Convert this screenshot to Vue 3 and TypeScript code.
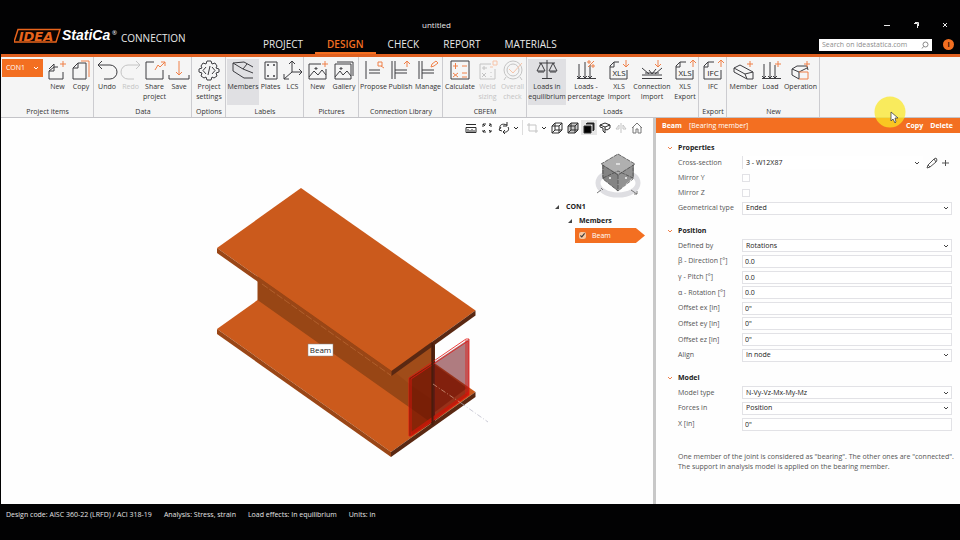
<script setup lang="ts">
import { ref } from 'vue'

interface Tool {
  label: string[]
  width: number
  ink: string
  accent?: string
  text?: string
  active?: boolean
  disabled?: boolean
}
interface Group {
  name: string
  tools: Tool[]
}
interface Field {
  id: string
  label: string
  kind: 'section' | 'check' | 'select' | 'text'
  value: string
}

const tabs = ['PROJECT', 'DESIGN', 'CHECK', 'REPORT', 'MATERIALS']
const activeTab = ref('DESIGN')

const loads = 'M3 19.5H22M5 5V19M11 3V19M16 6V19M3 17L5 19L7 17M9 17L11 19L13 17M14 17L16 19L18 17'

const groups: Group[] = [
  {
    name: 'Project items',
    tools: [
      { label: ['New'], width: 23, ink: 'M12 8H8L3 12V20H17V13M8 5V12H3M8 5L3 10', accent: 'M17 2V8M14 5H20' },
      { label: ['Copy'], width: 24, ink: 'M9 4H17V20H4V9L9 4V9H4', accent: 'M12 2H20V18' },
    ],
  },
  {
    name: 'Data',
    tools: [
      { label: ['Undo'], width: 24, ink: 'M7 2L3 6L7 10M3 6H15A7 7 0 0 1 15 20H9' },
      { label: ['Redo'], width: 23, ink: 'M17 2L21 6L17 10M21 6H9A7 7 0 0 0 9 20H15', disabled: true },
      { label: ['Share', 'project'], width: 25, ink: 'M11 3H3V20H20V11', accent: 'M12 11L15 6L17 8L22 3M18 3H22V7' },
      { label: ['Save'], width: 24, ink: 'M2 16V20H22V16', accent: 'M12 2V16M9 13L12 16L15 13' },
    ],
  },
  {
    name: 'Options',
    tools: [
      {
        label: ['Project', 'settings'],
        width: 32,
        ink: 'M10 2H14L15 5L18 4L20 7L19 9L22 10V13L19 14L20 17L17 19L15 18L14 21H10L9 18L7 19L4 17L5 14L2 13V10L5 9L4 7L6 4L9 5ZM9 8L6 11.500L9 15M15 8L18 11.500L15 15M13 7L11 16',
      },
    ],
  },
  {
    name: 'Labels',
    tools: [
      { label: ['Members'], width: 32, active: true, ink: 'M2 4L13 3L22 8M2 4V12L13 19H22M2 4L12 10M12 10L22 14M12 10L16 5' },
      { label: ['Plates'], width: 23, ink: 'M6 3H18V20H6ZM9 5V7M15 5V7M9 16V18M15 16V18M8 6H10M14 6H16M8 17H10M14 17H16' },
      { label: ['LCS'], width: 21, ink: 'M11 2V13L3 20M11 13H21M8 5L11 2L14 5M18 10L21 13L18 16M3 15V20H8' },
    ],
  },
  {
    name: 'Pictures',
    tools: [
      { label: ['New'], width: 25, ink: 'M15 5H3V20H20V10M3 18L8 12L12 16L16 11L20 16M9 9H11V10H9Z', accent: 'M19 2V8M16 5H22' },
      { label: ['Gallery'], width: 28, ink: 'M3 5H19V20H3ZM3 18L8 12L11 16L15 12L19 17M8 9H10V10H8ZM5 3H21V17' },
    ],
  },
  {
    name: 'Connection Library',
    tools: [
      { label: ['Propose'], width: 27, ink: 'M4 2V20M7 11H18M7 14H18', accent: 'M16 3H20V7H16ZM19 7L22 9' },
      { label: ['Publish'], width: 27, ink: 'M3 2V20M6 2V20M6 11H18M6 14H18', accent: 'M18 8V2M15 5L18 2L21 5' },
      { label: ['Manage'], width: 28, ink: 'M3 2V20M6 2V20M6 11H18M6 14H18', accent: 'M15 8L16 5L20 2L22 4L18 7Z' },
    ],
  },
  {
    name: 'CBFEM',
    tools: [
      { label: ['Calculate'], width: 32, ink: 'M3 2H21V20H3Z', accent: 'M5 7H10M7.500 4V10M14 7H19M5 14L10 18M10 14L5 18M14 14H19M14 18H19' },
      { label: ['Weld', 'sizing'], width: 23, disabled: true, ink: 'M15 5H4V20H19V10M6 9H11M8 7V11M6 14L10 18M10 14L6 18M15 13V14M15 17V18', accent: 'M17 2H21V6H17ZM14 8H17' },
      {
        label: ['Overall', 'check'],
        width: 27,
        disabled: true,
        ink: 'M12 2A9 9 0 1 0 12 20A9 9 0 1 0 12 2M12 5A6 6 0 1 0 12 17A6 6 0 1 0 12 5M5 18L3 21M19 18L21 21',
        accent: 'M8 10L12 14L21 4',
      },
    ],
  },
  {
    name: 'Loads',
    tools: [
      { label: ['Loads in', 'equilibrium'], width: 38, active: true, ink: 'M12 1V19M7 19.500H17M4 4H20M6 4L2 12H10L6 4M18 4L14 12H22L18 4M3 13H9M15 13H21' },
      { label: ['Loads -', 'percentage'], width: 40, ink: loads, accent: 'M14 8L20 2M14 2H16V4H14ZM18 6H20V8H18Z' },
      { label: ['XLS', 'Import'], width: 26, ink: 'M12 3H7L3 7V20H20V11M3 8H7V3', accent: 'M19 1V7M16 5L19 8L22 5', text: 'XLS' },
      { label: ['Connection', 'Import'], width: 40, ink: 'M2 16H22M2 19.500H22M2 9L9 15M22 9L15 15M9 11L12 15L16 10M5 14H19', accent: 'M18 1V7M15 5L18 8L21 5' },
      { label: ['XLS', 'Export'], width: 26, ink: 'M13 3H7L3 7V20H20V11M3 8H7V3', accent: 'M20 8V1M17 4L20 1L23 4', text: 'XLS' },
    ],
  },
  {
    name: 'Export',
    tools: [{ label: ['IFC'], width: 26, ink: 'M13 3H7L3 7V20H20V11M3 8H7V3', accent: 'M20 8V1M17 4L20 1L23 4', text: 'IFC' }],
  },
  {
    name: 'New',
    tools: [
      { label: ['Member'], width: 31, ink: 'M2 9L8 6L21 13V20H15L2 13ZM2 9L13 15L21 13M13 15L15 20', accent: 'M18 2V8M15 5H21' },
      { label: ['Load'], width: 23, ink: loads, accent: 'M19 2V8M16 5H22' },
      { label: ['Operation'], width: 37, ink: 'M3 10L8 7H18L19 11M3 10L10 13V20L3 16ZM10 13L18 9', accent: 'M10 13H19V20H10M18 2V8M15 5H21' },
    ],
  },
]

const sections = ref<{ title: string; size: string; fields: Field[] }[]>([
  {
    title: 'Properties',
    size: 'tight',
    fields: [
      { id: 'cross', label: 'Cross-section', kind: 'section', value: '3 - W12X87' },
      { id: 'mirror-y', label: 'Mirror Y', kind: 'check', value: '' },
      { id: 'mirror-z', label: 'Mirror Z', kind: 'check', value: '' },
      { id: 'geom', label: 'Geometrical type', kind: 'select', value: 'Ended' },
    ],
  },
  {
    title: 'Position',
    size: 'long',
    fields: [
      { id: 'defined', label: 'Defined by', kind: 'select', value: 'Rotations' },
      { id: 'beta', label: 'β - Direction [°]', kind: 'text', value: '0.0' },
      { id: 'gamma', label: 'γ - Pitch [°]', kind: 'text', value: '0.0' },
      { id: 'alpha', label: 'α - Rotation [°]', kind: 'text', value: '0.0' },
      { id: 'ex', label: 'Offset ex [in]', kind: 'text', value: '0"' },
      { id: 'ey', label: 'Offset ey [in]', kind: 'text', value: '0"' },
      { id: 'ez', label: 'Offset ez [in]', kind: 'text', value: '0"' },
      { id: 'align', label: 'Align', kind: 'select', value: 'In node' },
    ],
  },
  {
    title: 'Model',
    size: 'short',
    fields: [
      { id: 'model', label: 'Model type', kind: 'select', value: 'N-Vy-Vz-Mx-My-Mz' },
      { id: 'forces', label: 'Forces in', kind: 'select', value: 'Position' },
      { id: 'x', label: 'X [in]', kind: 'text', value: '0"' },
    ],
  },
])
const beamVisible = ref(true)
const search = ref('')
</script>

<template>
  <div class="app">
    <header class="top">
      <div class="brand">
        <svg class="logo" width="104" height="18" viewBox="0 0 104 18" role="img" aria-label="IDEA StatiCa">
          <path d="M4 2.500H46L42 15H0Z" fill="#0a0402" stroke="#e8641c" stroke-width="1.500" />
          <text x="22" y="13.500" text-anchor="middle" class="idea">IDEA</text>
          <text x="48" y="13" class="statica">StatiCa</text>
          <text x="98" y="8" class="reg">®</text>
        </svg>
        <span>CONNECTION</span>
      </div>
      <div class="doc">untitled</div>
      <div class="window">
        <button aria-label="Minimize"><svg width="8" height="8"><path d="M1 4.500H7" /></svg></button>
        <button aria-label="Restore"><svg width="8" height="8"><path d="M2 2.500H5.500V7M3 1.500H6.500V5" /></svg></button>
        <button aria-label="Close"><svg width="8" height="8"><path d="M2 2L6 6M6 2L2 6" /></svg></button>
      </div>
      <nav class="tabs">
        <button v-for="t in tabs" :key="t" :class="{ on: t === activeTab }" @click="activeTab = t">{{ t }}</button>
      </nav>
      <div class="help">
        <label class="search">
          <input v-model="search" type="text" placeholder="Search on ideastatica.com" aria-label="Search on ideastatica.com" />
          <svg width="8" height="8"><circle cx="4.500" cy="3.500" r="2.500" /><path d="M2.500 5.500L1 7.500" /></svg>
        </label>
        <button class="info" aria-label="Information">i</button>
      </div>
    </header>

    <div class="ribbon">
      <section v-for="(g, gi) in groups" :key="gi" class="group">
        <div class="tools">
          <button v-if="gi === 0" class="item">
            CON1
            <svg width="6" height="4"><path d="M1 1L3 3L5 1" /></svg>
          </button>
          <button
            v-for="(t, ti) in g.tools"
            :key="ti"
            class="tool"
            :class="{ active: t.active }"
            :disabled="t.disabled"
            :style="{ width: t.width + 'px' }"
          >
            <svg width="24" height="22" viewBox="0 0 24 22">
              <path class="ink" :d="t.ink" />
              <path v-if="t.accent" class="accent" :d="t.accent" />
              <text v-if="t.text" x="12" y="17" text-anchor="middle">{{ t.text }}</text>
            </svg>
            <span v-for="l in t.label" :key="l">{{ l }}</span>
          </button>
        </div>
        <h2>{{ g.name }}</h2>
      </section>
    </div>

    <main class="work">
      <div class="view">
        <svg class="scene" viewBox="1 118 652 386" preserveAspectRatio="xMinYMin meet">
          <path d="M217 329L301 269L475.500 392L391 452Z" fill="#cb5a1c" />
          <path d="M217 329L391 452V457L217 334Z" fill="#9a4616" />
          <path d="M391 452L475.500 392V397L391 457Z" fill="#5a2812" />
          <path d="M257.500 275V300L433 424V343L391 330Z" fill="#984615" />
          <path d="M392 370L431 343V399L412 386Z" fill="#a04c19" />
          <path d="M431.500 342H435V423L431.500 425Z" fill="#542610" />
          <path d="M301 188L475.500 310.500L391.500 371L217 248Z" fill="#cb5a1c" />
          <path d="M217 248L391.500 371V376L217 253Z" fill="#9a4616" />
          <path d="M391.500 371L475.500 310.500V315.500L391.500 376Z" fill="#5a2812" />
          <path d="M262 284L391 375.500" stroke="#c0713a" stroke-width=".6" stroke-dasharray="7 2" fill="none" />
          <path d="M409 378L433 363V422L411 436H409Z" fill="#6e1002" fill-opacity=".72" />
          <path d="M433 363L469 339V394L433 422Z" fill="#6e1018" fill-opacity=".55" />
          <path d="M435 365L467 388L435 412Z" fill="#6e1002" fill-opacity=".5" />
          <path d="M411 432L469 391V395L411 436Z" fill="#c81808" fill-opacity=".8" />
          <path d="M411 436V379L468 341V395M409 378L466 339H469V395L411 436H409ZM466 340V394" fill="none" stroke="#e41410" stroke-width=".8" />
          <path d="M432.500 343V425" stroke="#4a1c0c" stroke-width="2" />
          <path d="M433 384L461 403" stroke="#d9a58a" stroke-width=".7" stroke-dasharray="5 2 1 2" />
          <path d="M461 403L488 422" stroke="#b4b4c4" stroke-width=".7" stroke-dasharray="5 2 1 2" />
          <rect x="308" y="344" width="25" height="12" fill="#fff" stroke="#888" stroke-width=".5" />
          <text x="320.500" y="353" text-anchor="middle" class="tag">Beam</text>
        </svg>

        <div class="overlay">
          <div class="viewbar">
            <button aria-label="Measure"><svg width="12" height="12"><path d="M1 2.500H11M1 5.500H11V10.500H1ZM3 7V10M5 8V10M7 7V10M9 8V10" /></svg></button>
            <button aria-label="Zoom all"><svg width="12" height="12"><path d="M2 5V2H5M2 2L4 4M8 2H10V5M10 2L8 4M2 8V10H5M2 10L4 8M10 8V10H8M10 10L8 8" /></svg></button>
            <button class="wide" aria-label="Rotate">
              <svg width="12" height="12"><path d="M2 7C1 3 4 1 9 3M9 0V4H5M10 5C12 8 9 11 5 10M7 8L5 10L7 12M3 5L1 8L4 9" /></svg>
              <svg width="6" height="12"><path d="M1 5L3 7L5 5" /></svg>
            </button>
            <button class="wide cut" aria-label="Clip">
              <svg class="pale" width="12" height="12"><path d="M1 3H10V11M3 1V9H12" /></svg>
              <svg width="6" height="12"><path d="M1 5L3 7L5 5" /></svg>
            </button>
            <button aria-label="Wireframe"><svg width="12" height="12"><path d="M1 4L4 1H11V8L8 11H1ZM1 4H8V11M8 4L11 1M4 1V8H11M4 8L1 11" /></svg></button>
            <button aria-label="Transparent"><svg width="12" height="12"><path fill="#c8c8c8" d="M1 4L4 1H11V8L8 11H1Z" /><path d="M1 4H8V11M8 4L11 1M4 1V8H11M4 8L1 11" /></svg></button>
            <button class="solid" aria-label="Solid"><svg width="12" height="12"><path fill="#000" d="M1 4H8V11H1Z" /><path fill="#000" d="M3 2L4 1H11V8L10 9V2Z" /></svg></button>
            <button aria-label="Section"><svg width="12" height="12"><path d="M1 3L6 1L11 3V6L8 8L6 7V11L4 9V6L1 5ZM1 3L6 5L11 3M6 5V7" /></svg></button>
            <button aria-label="Mirror"><svg class="pale" width="12" height="12"><path d="M6 1V11M4 3L1 7H4ZM8 3L11 7H8Z" /></svg></button>
            <button aria-label="Home"><svg class="grey" width="12" height="12"><path d="M1 6L6 1L11 6M2 5V11H5V7H7V11H10V5" /></svg></button>
          </div>
          <svg class="cube" width="50" height="50" viewBox="593 150 50 50">
            <ellipse cx="618" cy="183" rx="20" ry="12" fill="none" stroke="#dedee2" stroke-width="5" />
            <path d="M618 154L634 164V177L618 191L602 177V164Z" fill="#929292" />
            <path d="M618 154L635 164L618 174L601 164Z" fill="#b0b0b0" />
            <path d="M618 174V191L603 179V165Z" fill="#848484" />
            <path
              d="M618 154L635 164L618 175L601 164ZM603 165V179L618 191L633 179V165M603 178L618 171L633 178M618 175V191"
              fill="none" stroke="#444" stroke-width=".7" stroke-dasharray="4 1"
            />
            <path d="M616 164H620M609 178H611M625 178H627" stroke="#ddd" stroke-width="2" />
            <path d="M597 193L601 190M601 188L603 190M631 190L637 194M637 191V194H634" fill="none" stroke="#777" />
          </svg>
          <ul class="tree">
            <li><i></i>CON1</li>
            <li class="sub"><i></i>Members</li>
            <li class="leaf">
              <label><input v-model="beamVisible" type="checkbox" />Beam</label>
            </li>
          </ul>
        </div>
      </div>

      <aside class="panel">
        <div class="head">
          <b>Beam</b><span>[Bearing member]</span>
          <button>Copy</button><button>Delete</button>
        </div>
        <section v-for="s in sections" :key="s.title" class="props">
          <h3><svg width="6" height="4"><path d="M1 1L3 3L5 1" /></svg>{{ s.title }}</h3>
          <div class="rows" :class="s.size">
            <div v-for="f in s.fields" :key="f.id" class="row">
              <label :for="f.id">{{ f.label }}</label>
              <input v-if="f.kind === 'check'" :id="f.id" type="checkbox" class="tick" />
              <input v-else-if="f.kind === 'text'" :id="f.id" v-model="f.value" type="text" class="field" />
              <div v-else class="pick" :class="{ bare: f.kind === 'section' }">
                <select :id="f.id" v-model="f.value" class="field">
                  <option>{{ f.value }}</option>
                </select>
                <svg class="arrow" width="6" height="4"><path d="M1 1L3 3L5 1" /></svg>
                <template v-if="f.kind === 'section'">
                  <button class="edit" aria-label="Edit"><svg width="12" height="12"><path d="M1 11L2 8L8 2L10 1L11 3L10 5L4 10ZM2 8L4 10M8 2L10 5" /></svg></button>
                  <button aria-label="Add"><svg width="8" height="12"><path d="M4.500 3V9M1 6H8" /></svg></button>
                </template>
              </div>
            </div>
          </div>
        </section>
        <p class="note">
          One member of the joint is considered as "bearing". The other ones are "connected".<br />
          The support in analysis model is applied on the bearing member.
        </p>
      </aside>
    </main>

    <footer class="status">
      <span>Design code: AISC 360-22 (LRFD) / ACI 318-19</span>
      <span>Analysis: Stress, strain</span>
      <span>Load effects: In equilibrium</span>
      <span>Units: in</span>
    </footer>

    <svg class="pointer" width="34" height="34" viewBox="0 0 34 34" aria-hidden="true">
      <circle cx="16" cy="16" r="15.500" fill="#fbe822" fill-opacity=".72" />
      <path d="M17 16V25L19 23L21 27L22 26L21 22H24Z" fill="#fff" stroke="#444" stroke-width=".8" />
    </svg>
  </div>
</template>

<style>
body {
  margin: 0;
  background: #000;
}
</style>

<style scoped>
.app {
  position: relative;
  display: flex;
  flex-direction: column;
  min-height: 100vh;
  box-sizing: border-box;
  padding-left: 1px;
  background: #020203;
  color: #333;
  font: 7px/10px "Open Sans", "Noto Sans", sans-serif;
}
button,
input,
select {
  box-sizing: border-box;
  margin: 0;
  padding: 0;
  border: 0;
  border-radius: 0;
  background: none;
  color: inherit;
  font: inherit;
}
svg {
  display: block;
  flex: none;
}
button path {
  stroke: currentColor;
}
h2,
h3,
p,
ul {
  margin: 0;
  padding: 0;
  font: inherit;
  list-style: none;
}

.top {
  display: grid;
  grid-template: 18px 18px / 250px 1fr auto;
  padding-top: 18px;
  border-bottom: 3px solid #e06020;
  color: #e8e8e8;
}
.brand {
  grid-row: 1 / 3;
  display: flex;
  gap: 3px;
  align-items: center;
  padding-left: 13px;
  font-size: 10px;
}
.brand span {
  padding-top: 3px;
}
.idea {
  fill: #e8641c;
  font: italic bold 13px "DejaVu Sans", sans-serif;
}
.statica {
  fill: #fff;
  font: italic bold 14px "Liberation Sans", sans-serif;
}
.reg {
  fill: #fff;
  font-size: 6px;
}
.doc {
  padding-left: 171px;
  font-size: 8px;
  line-height: 14px;
}
.window {
  display: flex;
  gap: 21px;
  justify-content: flex-end;
  padding: 3px 11px 0 0;
  fill: none;
}
.window button {
  height: 8px;
}
.tabs {
  display: flex;
}
.tabs button {
  padding: 0 12px;
  border-bottom: 2px solid transparent;
  font-size: 10px;
  line-height: 16px;
}
.tabs .on {
  border-color: #f36f21;
  color: #f36f21;
  font-weight: 600;
}
.help {
  display: flex;
  gap: 11px;
  align-items: flex-start;
  padding: 3px 6px 0 0;
}
.search {
  display: flex;
  align-items: center;
  width: 113px;
  height: 12px;
  padding-right: 3px;
  box-sizing: border-box;
  background: #fff;
  fill: none;
  stroke: #888;
}
.search input {
  flex: 1;
  min-width: 0;
  padding-left: 3px;
  color: #444;
  outline: 0;
}
.search input::placeholder {
  color: #8c8c8c;
}
.info {
  width: 11px;
  height: 11px;
  border-radius: 50%;
  background: #f36f21;
  color: #301000;
  font-weight: 700;
}

.ribbon {
  display: flex;
  height: 60px;
  border-bottom: 1px solid #c4c4c8;
  background: #f5f5f5;
}
.group {
  display: flex;
  flex-direction: column;
  justify-content: space-between;
  padding: 2px 0 0 1px;
  border-right: 1px solid #ccccd0;
}
.tools {
  display: flex;
}
.tool {
  display: flex;
  flex-direction: column;
  align-items: center;
  height: 46px;
  line-height: 10px;
  white-space: nowrap;
}
.tool > * {
  flex: none;
}
.tool svg {
  margin-bottom: 1px;
}
.tool.active {
  background: #e0e0e3;
}
.ink {
  fill: none;
  stroke: #3c3c40;
}
.tool .accent {
  fill: none;
  stroke: #f08048;
}
.tool text {
  fill: #222;
  font-size: 8px;
}
.tool:disabled {
  color: #c4c4c4;
}
.tool:disabled .ink {
  stroke: #c4c4c4;
}
.tool:disabled .accent {
  stroke: #f8c4a8;
}
.item {
  display: flex;
  gap: 8px;
  align-items: center;
  justify-content: center;
  width: 41px;
  height: 18px;
  margin-right: 3px;
  background: #f36f21;
  color: #fff;
  fill: none;
}
.group h2 {
  text-align: center;
  line-height: 11px;
}

.work {
  flex: 1;
  display: grid;
  grid-template-columns: 1fr 307px;
  background: #fefefe;
}
.view {
  display: grid;
  grid-template-rows: 1fr;
}
.scene,
.overlay {
  grid-area: 1 / 1;
}
.scene {
  width: 100%;
}
.tag {
  fill: #222;
  font-size: 8px;
}
.overlay {
  z-index: 1;
  justify-self: end;
  display: flex;
  flex-direction: column;
  align-items: flex-end;
  padding: 2px 8px 0 0;
}
.viewbar {
  display: flex;
  fill: none;
}
.viewbar button {
  display: flex;
  gap: 3px;
  align-items: center;
  justify-content: center;
  width: 16px;
  height: 15px;
  color: #2c2c2c;
}
.viewbar .wide {
  width: 27px;
}
.viewbar .cut {
  border-left: 1px solid #ddd;
}
.viewbar .pale {
  color: #c4c4c4;
}
.viewbar .grey {
  color: #777;
}
.viewbar .solid {
  background: #e6e6e6;
}
.cube {
  margin: 15px 2px 0 0;
}
.tree {
  width: 90px;
  color: #222;
  font-weight: 700;
  line-height: 14px;
}
.tree li {
  display: flex;
  gap: 7px;
  align-items: center;
}
.tree i {
  width: 4px;
  height: 4px;
  background: #444;
  clip-path: polygon(100% 0, 100% 100%, 0 100%);
}
.tree .sub {
  padding-left: 13px;
}
.tree .leaf {
  padding-left: 20px;
}
.leaf label {
  display: flex;
  flex: 1;
  gap: 6px;
  align-items: center;
  height: 15px;
  padding-left: 4px;
  background: #f36f21;
  clip-path: polygon(0 0, 87% 0, 100% 50%, 87% 100%, 0 100%);
  color: #fff;
  font-weight: 400;
}
.leaf input {
  width: 7px;
  height: 7px;
  accent-color: #f8c8a0;
}

.panel {
  border-left: 3px solid #c8c8c8;
}
.head {
  display: flex;
  gap: 7px;
  align-items: center;
  height: 15px;
  padding: 0 7px 0 6px;
  background: #f36f21;
  color: #fff;
}
.head span {
  flex: 1;
}
.head button {
  font-weight: 700;
}
.props {
  padding: 10px 8px 0 11px;
}
.props h3 {
  display: flex;
  gap: 5px;
  align-items: center;
  height: 10px;
  color: #222;
  font-weight: 700;
  fill: none;
  stroke: #f08048;
}
.rows {
  display: grid;
  padding: 2px 0 0 11px;
}
.rows.tight {
  height: 61px;
  grid-template-rows: repeat(4, 1fr);
}
.rows.long {
  height: 125px;
  grid-template-rows: repeat(8, 1fr);
}
.rows.short {
  height: 47px;
  grid-template-rows: repeat(3, 1fr);
}
.row {
  display: grid;
  grid-template-columns: 64px 1fr;
  align-items: center;
  color: #555;
}
.field {
  flex: 1;
  min-width: 0;
  height: 13px;
  padding: 0 2px;
  border: 1px solid #e2e2e6;
  appearance: none;
  background: #fff;
  color: #222;
}
select.field {
  padding-left: 3px;
}
.pick {
  display: flex;
  align-items: center;
  fill: none;
  stroke: #444;
}
.arrow {
  margin: 0 3px 0 -9px;
  pointer-events: none;
}
.pick button {
  margin-right: 3px;
}
.pick .edit {
  margin-left: 3px;
}
.bare .field {
  border-width: 0 0 0 1px;
}
.tick {
  width: 8px;
  height: 8px;
  border: 1px solid #e2e2e6;
  appearance: none;
  background: #fff;
}
.tick:checked {
  background: #f36f21;
}
.note {
  padding: 20px 0 0 22px;
  color: #555;
  white-space: nowrap;
}

.status {
  display: flex;
  gap: 12px;
  height: 30px;
  padding: 6px 5px 0;
  color: #e4e4e4;
}
.pointer {
  position: absolute;
  top: 96px;
  right: 52px;
  pointer-events: none;
}
</style>
